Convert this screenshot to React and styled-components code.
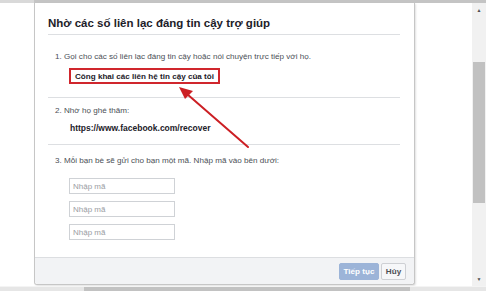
import React from "react";
import styled, { createGlobalStyle } from "styled-components";

const Global = createGlobalStyle`
  html, body { margin: 0; padding: 0; background: #fff; }
  body { font-family: "Liberation Sans", Arial, sans-serif; }
  * { box-sizing: border-box; }
`;

const Page = styled.div`
  width: 486px;
  height: 291px;
  display: flex;
  flex-direction: column;
  position: relative;
  overflow: hidden;
  background: #fff;
`;

const TopBar = styled.div`
  height: 3px;
  background: linear-gradient(to right, #d9d9d9 0 34px, #c4c4c4 34px);
`;

const Middle = styled.div`
  flex: 1;
  display: flex;
  min-height: 0;
`;

const Dialog = styled.div`
  margin-left: 34px;
  width: 381px;
  height: 282px;
  border: 1px solid #c6c6c6;
  border-top: none;
  border-radius: 0 0 3px 3px;
  box-shadow: 1px 1px 2px rgba(0, 0, 0, 0.12);
  display: flex;
  flex-direction: column;
  background: #fff;
`;

const Header = styled.div`
  margin: 0 14px 0 13px;
  height: 32px;
  border-bottom: 1px solid #dddfe2;
  display: flex;
  align-items: center;
  padding-top: 8px;
`;

const Title = styled.h2`
  margin: 0;
  font-size: 11.5px;
  font-weight: bold;
  color: #1d2129;
`;

const Body = styled.div`
  flex: 1;
  display: flex;
  flex-direction: column;
  margin: 0 14px 0 13px;
`;

const Section = styled.div`
  height: ${(p) => p.$h}px;
  border-bottom: ${(p) => (p.$line ? "1px solid #dddfe2" : "none")};
  padding: ${(p) => p.$pt}px 0 0 7px;
  display: flex;
  flex-direction: column;
  align-items: flex-start;
`;

const Step = styled.div`
  font-size: 8.1px;
  color: #4b4f56;
  line-height: 11px;
  white-space: nowrap;
`;

const Highlight = styled.div`
  margin: ${(p) => p.$mt}px 0 0 14px;
  border: 2px solid #d0262d;
  padding: 0 4px;
  height: 16px;
  display: flex;
  align-items: center;
  font-size: 8.1px;
  font-weight: bold;
  color: #1d2129;
  white-space: nowrap;
`;

const Url = styled.div`
  margin: ${(p) => p.$mt}px 0 0 15px;
  font-size: 8.5px;
  font-weight: bold;
  color: #1d2129;
`;

const Inputs = styled.div`
  margin: 12px 0 0 14px;
  display: flex;
  flex-direction: column;
  gap: 7px;
`;

const CodeInput = styled.input`
  width: 106px;
  height: 16px;
  border: 1px solid #cfd2d6;
  padding: 0 3px;
  font-family: "Liberation Sans", Arial, sans-serif;
  font-size: 8px;
  color: #4b4f56;
  outline: none;
  &::placeholder { color: #9a9da3; }
`;

const Footer = styled.div`
  height: 27px;
  background: #f2f3f5;
  border-top: 1px solid #dcdee1;
  border-radius: 0 0 3px 3px;
  display: flex;
  justify-content: flex-end;
  align-items: center;
  gap: 2px;
  padding: 0 8px 0 0;
`;

const Button = styled.button`
  height: 17px;
  padding: 0;
  font-family: "Liberation Sans", Arial, sans-serif;
  font-size: 8.1px;
  font-weight: bold;
  white-space: nowrap;
  border-radius: 2px;
  border: 1px solid ${(p) => (p.$primary ? "#9cb4d8" : "#ced0d4")};
  background: ${(p) => (p.$primary ? "#9cb4d8" : "#f6f7f9")};
  color: ${(p) => (p.$primary ? "#fff" : "#4b4f56")};
  width: ${(p) => p.$w}px;
`;

const Spacer = styled.div`
  flex: 1;
`;

const Scrollbar = styled.div`
  width: 14px;
  background: #f1f1f1;
  display: flex;
  flex-direction: column;
  align-items: center;
  padding: 2px 1px;
`;

const Arrow = styled.div`
  height: 10px;
  font-size: 5px;
  color: #505050;
  display: flex;
  align-items: center;
`;

const Thumb = styled.div`
  width: 12px;
  height: 141px;
  margin-top: ${(p) => p.$mt}px;
  background: #c1c1c1;
`;

const BottomBar = styled.div`
  height: 5px;
  background: linear-gradient(to right, #e6e6e6 0 84px, #c2c2c2 84px 410px, #e6e6e6 410px);
  border-top: 1px solid #f4f4f4;
`;

const Overlay = styled.svg`
  position: absolute;
  left: 0;
  top: 0;
  pointer-events: none;
`;

export default function App() {
  return (
    <Page>
      <Global />
      <TopBar />
      <Middle>
        <Dialog>
          <Header>
            <Title>Nhờ các số liên lạc đáng tin cậy trợ giúp</Title>
          </Header>
          <Body>
            <Section $h={63} $line $pt={16}>
              <Step>1. Gọi cho các số liên lạc đáng tin cậy hoặc nói chuyện trực tiếp với họ.</Step>
              <Highlight $mt={6}>Công khai các liên hệ tin cậy của tôi</Highlight>
            </Section>
            <Section $h={47} $line $pt={7}>
              <Step>2. Nhờ họ ghé thăm:</Step>
              <Url $mt={7}>https://www.facebook.com/recover</Url>
            </Section>
            <Section $h={112} $pt={10}>
              <Step>3. Mỗi bạn bè sẽ gửi cho bạn một mã. Nhập mã vào bên dưới:</Step>
              <Inputs>
                <CodeInput placeholder="Nhập mã" />
                <CodeInput placeholder="Nhập mã" />
                <CodeInput placeholder="Nhập mã" />
              </Inputs>
            </Section>
          </Body>
          <Footer>
            <Button $primary $w={40}>Tiếp tục</Button>
            <Button $w={25}>Hủy</Button>
          </Footer>
        </Dialog>
        <Spacer />
        <Scrollbar>
          <Arrow>▲</Arrow>
          <Thumb $mt={47} />
          <Spacer />
          <Arrow>▼</Arrow>
        </Scrollbar>
      </Middle>
      <BottomBar />
      <Overlay width="486" height="291" viewBox="0 0 486 291">
        <line x1="248" y1="147" x2="187" y2="94" stroke="#cc1f24" strokeWidth="2" strokeLinecap="round" />
        <polygon points="179,87 193,91 185,99" fill="#cc1f24" />
      </Overlay>
    </Page>
  );
}
